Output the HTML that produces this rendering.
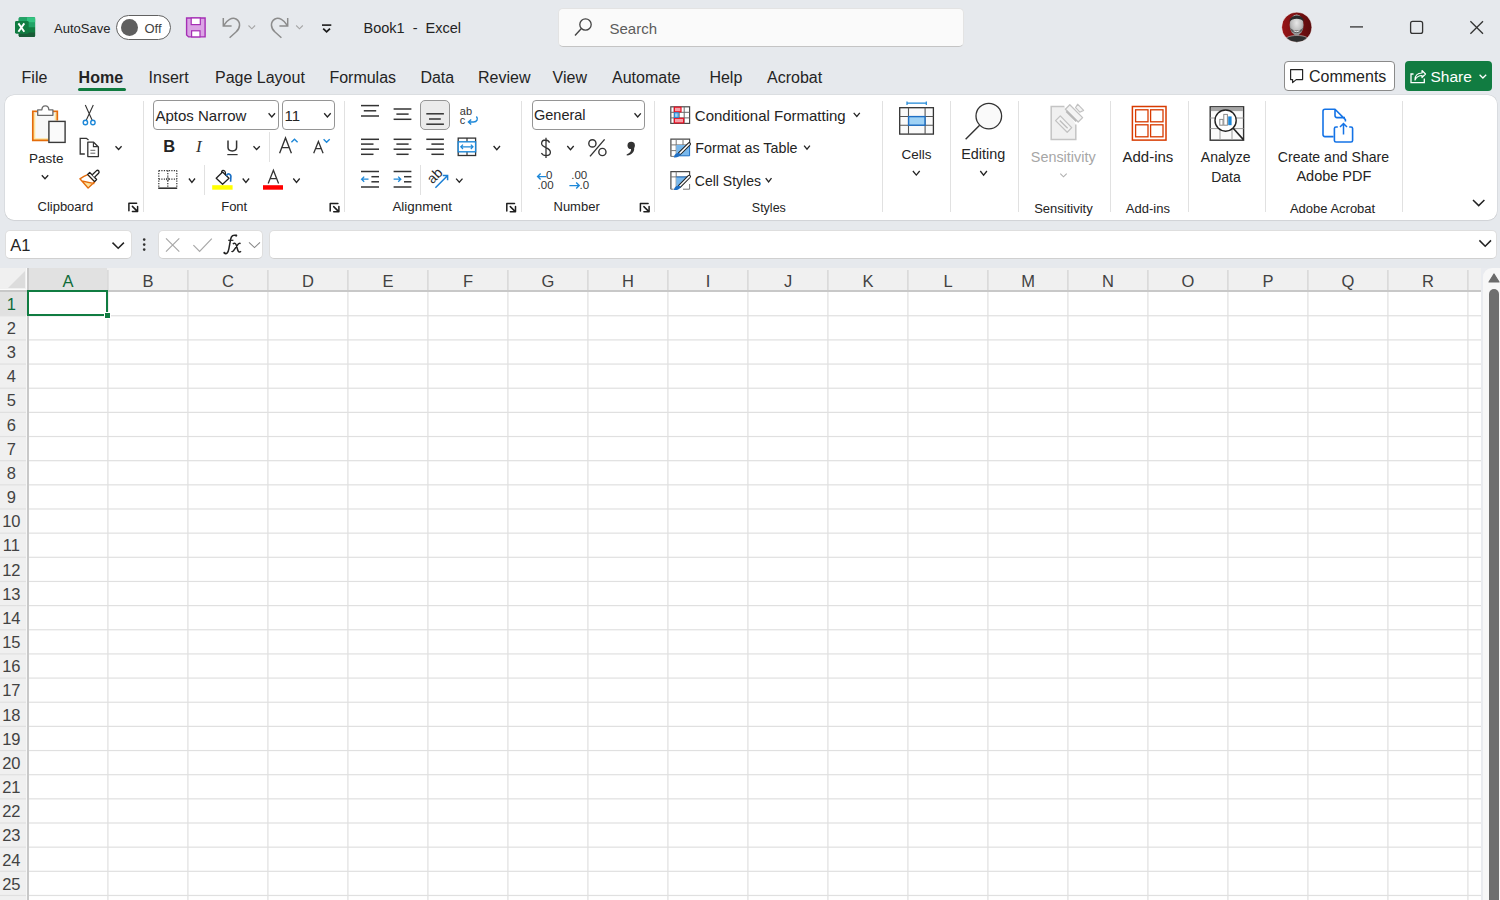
<!DOCTYPE html>
<html><head><meta charset="utf-8"><title>Book1 - Excel</title>
<style>
html,body{margin:0;padding:0;}
body{width:1500px;height:900px;overflow:hidden;position:relative;background:#e6e9ed;font-family:"Liberation Sans", sans-serif;color:#242424;}
.t{position:absolute;line-height:1;white-space:pre;}
svg{position:absolute;left:0;top:0;overflow:visible;}
</style></head><body>

<div class="t" style="left:54.0px;top:21.7px;font-size:13px;color:#242424;font-weight:normal;">AutoSave</div>
<div style="position:absolute;left:116px;top:15px;width:53px;height:23px;border:1px solid #616161;border-radius:13px;background:#fff;"></div>
<div style="position:absolute;left:121px;top:18.5px;width:17px;height:17px;border-radius:50%;background:#5f5f5f;"></div>
<div class="t" style="left:144.5px;top:21.7px;font-size:13px;color:#424242;font-weight:normal;">Off</div>
<div class="t" style="left:363.5px;top:20.7px;font-size:14.5px;color:#242424;font-weight:normal;">Book1  -  Excel</div>
<div style="position:absolute;left:558px;top:8px;width:404px;height:37px;background:#fafafa;border:1px solid #e3e3e3;border-bottom:1px solid #c4c4c4;border-radius:5px;"></div>
<div class="t" style="left:609.5px;top:21.3px;font-size:15px;color:#5c5c5c;font-weight:normal;">Search</div>
<svg width="1500" height="60" style="left:0;top:0"><defs><clipPath id="avc"><circle cx="1296.8" cy="27.2" r="15"/></clipPath><linearGradient id="avg" x1="0" x2="1"><stop offset="0" stop-color="#9c1517"/><stop offset="1" stop-color="#560b0c"/></linearGradient><radialGradient id="fcg" cx="0.5" cy="0.4" r="0.65"><stop offset="0" stop-color="#e8e8e8"/><stop offset="0.6" stop-color="#bdbdbd"/><stop offset="1" stop-color="#7a7a7a"/></radialGradient></defs><g clip-path="url(#avc)"><rect x="1280" y="10" width="34" height="34" fill="url(#avg)"/><path d="M1283 44 C1284 37 1290 35.5 1297 35.5 C1304 35.5 1310 37 1311 44 Z" fill="#2f2f2f" stroke="#d0d0d0" stroke-width="0.6"/><ellipse cx="1296.6" cy="25" rx="7" ry="10.4" fill="url(#fcg)"/><path d="M1289.6 22 C1289 14 1304 13 1303.8 22 C1301.5 17.8 1292 17.8 1289.6 22 Z" fill="#2a2a2a"/><path d="M1290 27.5 C1291 35 1302.4 35 1303.2 27.5 C1301 31.5 1292.4 31.5 1290 27.5 Z" fill="#5e5e5e"/><path d="M1293.6 30.8 Q1296.6 32.6 1299.6 30.8" stroke="#f0f0f0" stroke-width="1" fill="none"/></g><circle cx="1296.8" cy="27.2" r="15.2" fill="none" stroke="#f4f4f4" stroke-width="0.6"/></svg>
<div class="t" style="left:21.6px;top:69.7px;font-size:16px;color:#242424;font-weight:normal;">File</div>
<div class="t" style="left:148.6px;top:69.7px;font-size:16px;color:#242424;font-weight:normal;">Insert</div>
<div class="t" style="left:215.0px;top:69.7px;font-size:16px;color:#242424;font-weight:normal;">Page Layout</div>
<div class="t" style="left:329.4px;top:69.7px;font-size:16px;color:#242424;font-weight:normal;">Formulas</div>
<div class="t" style="left:420.4px;top:69.7px;font-size:16px;color:#242424;font-weight:normal;">Data</div>
<div class="t" style="left:478.0px;top:69.7px;font-size:16px;color:#242424;font-weight:normal;">Review</div>
<div class="t" style="left:552.6px;top:69.7px;font-size:16px;color:#242424;font-weight:normal;">View</div>
<div class="t" style="left:612.0px;top:69.7px;font-size:16px;color:#242424;font-weight:normal;">Automate</div>
<div class="t" style="left:709.4px;top:69.7px;font-size:16px;color:#242424;font-weight:normal;">Help</div>
<div class="t" style="left:767.0px;top:69.7px;font-size:16px;color:#242424;font-weight:normal;">Acrobat</div>
<div class="t" style="left:78.6px;top:69.7px;font-size:16px;color:#242424;font-weight:bold;">Home</div>
<div style="position:absolute;left:78px;top:88px;width:48px;height:3px;background:#0f7b3f;border-radius:2px;"></div>
<div style="position:absolute;left:1284px;top:61px;width:109px;height:28px;border:1px solid #8a8a8a;border-radius:4px;background:#fff;"></div>
<div class="t" style="left:1309.0px;top:68.7px;font-size:16px;color:#242424;font-weight:normal;">Comments</div>
<div style="position:absolute;left:1405px;top:61px;width:87px;height:30px;background:#117c41;border-radius:4px;"></div>
<div class="t" style="left:1430.5px;top:69.1px;font-size:15.5px;color:#ffffff;font-weight:normal;">Share</div>
<div style="position:absolute;left:4.5px;top:95px;width:1492.5px;height:124.6px;background:#fff;border-radius:9px;box-shadow:0 0 0 0.6px rgba(0,0,0,0.09),0 0.5px 1px rgba(0,0,0,0.05);"></div>
<div class="t" style="left:29.0px;top:151.6px;font-size:13.5px;color:#242424;font-weight:normal;">Paste</div>
<div class="t" style="left:37.5px;top:200.2px;font-size:13px;color:#242424;font-weight:normal;">Clipboard</div>
<div style="position:absolute;left:153px;top:100px;width:124px;height:28px;border:1px solid #959595;border-radius:4px;background:#fff;"></div>
<div class="t" style="left:155.5px;top:108.0px;font-size:15px;color:#242424;font-weight:normal;">Aptos Narrow</div>
<div style="position:absolute;left:282px;top:100px;width:51px;height:28px;border:1px solid #959595;border-radius:4px;background:#fff;"></div>
<div class="t" style="left:284.5px;top:108.0px;font-size:15px;color:#242424;font-weight:normal;">11</div>
<div class="t" style="left:221.2px;top:200.4px;font-size:13px;color:#242424;font-weight:normal;">Font</div>
<div class="t" style="left:392.4px;top:200.1px;font-size:13.4px;color:#242424;font-weight:normal;">Alignment</div>
<div style="position:absolute;left:420px;top:100px;width:28px;height:28px;border:1px solid #959595;border-radius:5px;background:#ebebeb;"></div>
<div style="position:absolute;left:532px;top:100px;width:111px;height:28px;border:1px solid #959595;border-radius:4px;background:#fff;"></div>
<div class="t" style="left:534.0px;top:108.4px;font-size:14.5px;color:#242424;font-weight:normal;">General</div>
<div class="t" style="left:553.5px;top:200.4px;font-size:13px;color:#242424;font-weight:normal;">Number</div>
<div class="t" style="left:694.8px;top:107.9px;font-size:15px;color:#242424;font-weight:normal;">Conditional Formatting</div>
<div class="t" style="left:695.3px;top:140.8px;font-size:14.3px;color:#242424;font-weight:normal;">Format as Table</div>
<div class="t" style="left:694.8px;top:173.5px;font-size:14px;color:#242424;font-weight:normal;">Cell Styles</div>
<div class="t" style="left:751.8px;top:201.8px;font-size:12.5px;color:#242424;font-weight:normal;">Styles</div>
<div class="t" style="left:901.5px;top:147.8px;font-size:13.5px;color:#242424;font-weight:normal;">Cells</div>
<div class="t" style="left:961.2px;top:147.0px;font-size:14.4px;color:#242424;font-weight:normal;">Editing</div>
<div class="t" style="left:1030.8px;top:149.5px;font-size:14.4px;color:#a6a6a6;font-weight:normal;">Sensitivity</div>
<div class="t" style="left:1034.2px;top:201.5px;font-size:13px;color:#242424;font-weight:normal;">Sensitivity</div>
<div class="t" style="left:1122.5px;top:149.0px;font-size:15px;color:#242424;font-weight:normal;">Add-ins</div>
<div class="t" style="left:1125.8px;top:201.5px;font-size:13px;color:#242424;font-weight:normal;">Add-ins</div>
<div class="t" style="left:1200.8px;top:149.8px;font-size:14px;color:#242424;font-weight:normal;">Analyze</div>
<div class="t" style="left:1211.2px;top:169.8px;font-size:14px;color:#242424;font-weight:normal;">Data</div>
<div class="t" style="left:1133.5px;width:400px;text-align:center;top:149.5px;font-size:14.1px;color:#242424;font-weight:normal;">Create and Share</div>
<div class="t" style="left:1133.9px;width:400px;text-align:center;top:169.1px;font-size:14.5px;color:#242424;font-weight:normal;">Adobe PDF</div>
<div class="t" style="left:1289.9px;top:201.6px;font-size:13px;color:#242424;font-weight:normal;">Adobe Acrobat</div>
<div style="position:absolute;left:143px;top:101px;width:1px;height:111px;background:#e1e1e1;"></div>
<div style="position:absolute;left:344px;top:101px;width:1px;height:111px;background:#e1e1e1;"></div>
<div style="position:absolute;left:521px;top:101px;width:1px;height:111px;background:#e1e1e1;"></div>
<div style="position:absolute;left:654px;top:101px;width:1px;height:111px;background:#e1e1e1;"></div>
<div style="position:absolute;left:882px;top:101px;width:1px;height:111px;background:#e1e1e1;"></div>
<div style="position:absolute;left:950px;top:101px;width:1px;height:111px;background:#e1e1e1;"></div>
<div style="position:absolute;left:1018px;top:101px;width:1px;height:111px;background:#e1e1e1;"></div>
<div style="position:absolute;left:1110px;top:101px;width:1px;height:111px;background:#e1e1e1;"></div>
<div style="position:absolute;left:1188px;top:101px;width:1px;height:111px;background:#e1e1e1;"></div>
<div style="position:absolute;left:1265px;top:101px;width:1px;height:111px;background:#e1e1e1;"></div>
<div style="position:absolute;left:1402px;top:101px;width:1px;height:111px;background:#e1e1e1;"></div>
<div style="position:absolute;left:269px;top:132px;width:1px;height:30px;background:#e1e1e1;"></div>
<div style="position:absolute;left:204px;top:165px;width:1px;height:30px;background:#e1e1e1;"></div>
<div style="position:absolute;left:420px;top:165px;width:1px;height:30px;background:#e1e1e1;"></div>
<div style="position:absolute;left:5px;top:230px;width:125px;height:27px;border:1px solid #dedede;border-bottom-color:#d0d0d0;border-radius:5px;background:#fff;"></div>
<div class="t" style="left:10.3px;top:236.8px;font-size:16.5px;color:#242424;font-weight:normal;">A1</div>
<div style="position:absolute;left:158px;top:230px;width:103px;height:27px;border:1px solid #dedede;border-bottom-color:#d0d0d0;border-radius:5px;background:#fff;"></div>
<div style="position:absolute;left:269px;top:230px;width:1226px;height:27px;border:1px solid #dedede;border-bottom-color:#d0d0d0;border-radius:5px;background:#fff;"></div>
<div style="position:absolute;left:0px;top:268px;width:1481px;height:632px;background:#ffffff;"></div>
<div style="position:absolute;left:0px;top:268px;width:1481px;height:22px;background:#f0f0f0;"></div>
<div style="position:absolute;left:29px;top:268px;width:78px;height:22px;background:#e1e1e1;"></div>
<div style="position:absolute;left:0px;top:292px;width:27px;height:608px;background:#f0f0f0;"></div>
<div style="position:absolute;left:0px;top:290px;width:1481px;height:2px;background:#c8c8c8;"></div>
<div style="position:absolute;left:0px;top:289px;width:27px;height:1px;background:#fbfbfb;"></div>
<svg width="30" height="300" style="left:0;top:0"><polygon points="8,288 25,288 25,271" fill="#dcdcdc"/></svg>
<div style="position:absolute;left:27px;top:268px;width:2px;height:632px;background:#c8c8c8;"></div>
<div style="position:absolute;left:26px;top:292px;width:1px;height:608px;background:#f7f7f7;"></div>
<div style="position:absolute;left:26px;top:268px;width:1px;height:22px;background:#fbfbfb;"></div>
<svg width="1500" height="900" style="left:0;top:0"><rect x="29" y="315.15" width="1452" height="1.2" fill="#e0e0e0"/><rect x="0" y="315.15" width="26" height="1.2" fill="#e0e0e0"/><rect x="29" y="339.30" width="1452" height="1.2" fill="#e0e0e0"/><rect x="0" y="339.30" width="26" height="1.2" fill="#e0e0e0"/><rect x="29" y="363.46" width="1452" height="1.2" fill="#e0e0e0"/><rect x="0" y="363.46" width="26" height="1.2" fill="#e0e0e0"/><rect x="29" y="387.62" width="1452" height="1.2" fill="#e0e0e0"/><rect x="0" y="387.62" width="26" height="1.2" fill="#e0e0e0"/><rect x="29" y="411.77" width="1452" height="1.2" fill="#e0e0e0"/><rect x="0" y="411.77" width="26" height="1.2" fill="#e0e0e0"/><rect x="29" y="435.92" width="1452" height="1.2" fill="#e0e0e0"/><rect x="0" y="435.92" width="26" height="1.2" fill="#e0e0e0"/><rect x="29" y="460.08" width="1452" height="1.2" fill="#e0e0e0"/><rect x="0" y="460.08" width="26" height="1.2" fill="#e0e0e0"/><rect x="29" y="484.24" width="1452" height="1.2" fill="#e0e0e0"/><rect x="0" y="484.24" width="26" height="1.2" fill="#e0e0e0"/><rect x="29" y="508.39" width="1452" height="1.2" fill="#e0e0e0"/><rect x="0" y="508.39" width="26" height="1.2" fill="#e0e0e0"/><rect x="29" y="532.54" width="1452" height="1.2" fill="#e0e0e0"/><rect x="0" y="532.54" width="26" height="1.2" fill="#e0e0e0"/><rect x="29" y="556.70" width="1452" height="1.2" fill="#e0e0e0"/><rect x="0" y="556.70" width="26" height="1.2" fill="#e0e0e0"/><rect x="29" y="580.86" width="1452" height="1.2" fill="#e0e0e0"/><rect x="0" y="580.86" width="26" height="1.2" fill="#e0e0e0"/><rect x="29" y="605.01" width="1452" height="1.2" fill="#e0e0e0"/><rect x="0" y="605.01" width="26" height="1.2" fill="#e0e0e0"/><rect x="29" y="629.16" width="1452" height="1.2" fill="#e0e0e0"/><rect x="0" y="629.16" width="26" height="1.2" fill="#e0e0e0"/><rect x="29" y="653.32" width="1452" height="1.2" fill="#e0e0e0"/><rect x="0" y="653.32" width="26" height="1.2" fill="#e0e0e0"/><rect x="29" y="677.48" width="1452" height="1.2" fill="#e0e0e0"/><rect x="0" y="677.48" width="26" height="1.2" fill="#e0e0e0"/><rect x="29" y="701.63" width="1452" height="1.2" fill="#e0e0e0"/><rect x="0" y="701.63" width="26" height="1.2" fill="#e0e0e0"/><rect x="29" y="725.78" width="1452" height="1.2" fill="#e0e0e0"/><rect x="0" y="725.78" width="26" height="1.2" fill="#e0e0e0"/><rect x="29" y="749.94" width="1452" height="1.2" fill="#e0e0e0"/><rect x="0" y="749.94" width="26" height="1.2" fill="#e0e0e0"/><rect x="29" y="774.10" width="1452" height="1.2" fill="#e0e0e0"/><rect x="0" y="774.10" width="26" height="1.2" fill="#e0e0e0"/><rect x="29" y="798.25" width="1452" height="1.2" fill="#e0e0e0"/><rect x="0" y="798.25" width="26" height="1.2" fill="#e0e0e0"/><rect x="29" y="822.40" width="1452" height="1.2" fill="#e0e0e0"/><rect x="0" y="822.40" width="26" height="1.2" fill="#e0e0e0"/><rect x="29" y="846.56" width="1452" height="1.2" fill="#e0e0e0"/><rect x="0" y="846.56" width="26" height="1.2" fill="#e0e0e0"/><rect x="29" y="870.72" width="1452" height="1.2" fill="#e0e0e0"/><rect x="0" y="870.72" width="26" height="1.2" fill="#e0e0e0"/><rect x="29" y="894.87" width="1452" height="1.2" fill="#e0e0e0"/><rect x="0" y="894.87" width="26" height="1.2" fill="#e0e0e0"/><rect x="29" y="919.02" width="1452" height="1.2" fill="#e0e0e0"/><rect x="0" y="919.02" width="26" height="1.2" fill="#e0e0e0"/><rect x="107.30" y="292" width="1.2" height="608" fill="#e0e0e0"/><rect x="107.30" y="270" width="1.2" height="20" fill="#d0d0d0"/><rect x="187.30" y="292" width="1.2" height="608" fill="#e0e0e0"/><rect x="187.30" y="270" width="1.2" height="20" fill="#d0d0d0"/><rect x="267.30" y="292" width="1.2" height="608" fill="#e0e0e0"/><rect x="267.30" y="270" width="1.2" height="20" fill="#d0d0d0"/><rect x="347.30" y="292" width="1.2" height="608" fill="#e0e0e0"/><rect x="347.30" y="270" width="1.2" height="20" fill="#d0d0d0"/><rect x="427.30" y="292" width="1.2" height="608" fill="#e0e0e0"/><rect x="427.30" y="270" width="1.2" height="20" fill="#d0d0d0"/><rect x="507.30" y="292" width="1.2" height="608" fill="#e0e0e0"/><rect x="507.30" y="270" width="1.2" height="20" fill="#d0d0d0"/><rect x="587.30" y="292" width="1.2" height="608" fill="#e0e0e0"/><rect x="587.30" y="270" width="1.2" height="20" fill="#d0d0d0"/><rect x="667.30" y="292" width="1.2" height="608" fill="#e0e0e0"/><rect x="667.30" y="270" width="1.2" height="20" fill="#d0d0d0"/><rect x="747.30" y="292" width="1.2" height="608" fill="#e0e0e0"/><rect x="747.30" y="270" width="1.2" height="20" fill="#d0d0d0"/><rect x="827.30" y="292" width="1.2" height="608" fill="#e0e0e0"/><rect x="827.30" y="270" width="1.2" height="20" fill="#d0d0d0"/><rect x="907.30" y="292" width="1.2" height="608" fill="#e0e0e0"/><rect x="907.30" y="270" width="1.2" height="20" fill="#d0d0d0"/><rect x="987.30" y="292" width="1.2" height="608" fill="#e0e0e0"/><rect x="987.30" y="270" width="1.2" height="20" fill="#d0d0d0"/><rect x="1067.30" y="292" width="1.2" height="608" fill="#e0e0e0"/><rect x="1067.30" y="270" width="1.2" height="20" fill="#d0d0d0"/><rect x="1147.30" y="292" width="1.2" height="608" fill="#e0e0e0"/><rect x="1147.30" y="270" width="1.2" height="20" fill="#d0d0d0"/><rect x="1227.30" y="292" width="1.2" height="608" fill="#e0e0e0"/><rect x="1227.30" y="270" width="1.2" height="20" fill="#d0d0d0"/><rect x="1307.30" y="292" width="1.2" height="608" fill="#e0e0e0"/><rect x="1307.30" y="270" width="1.2" height="20" fill="#d0d0d0"/><rect x="1387.30" y="292" width="1.2" height="608" fill="#e0e0e0"/><rect x="1387.30" y="270" width="1.2" height="20" fill="#d0d0d0"/><rect x="1467.30" y="292" width="1.2" height="608" fill="#e0e0e0"/><rect x="1467.30" y="270" width="1.2" height="20" fill="#d0d0d0"/></svg>
<div style="position:absolute;left:0px;top:292px;width:27px;height:23px;background:#e1e1e1;"></div>
<div class="t" style="left:-132.0px;width:400px;text-align:center;top:272.6px;font-size:16.5px;color:#0e6b38;font-weight:normal;">A</div>
<div class="t" style="left:-52.0px;width:400px;text-align:center;top:272.6px;font-size:16.5px;color:#424242;font-weight:normal;">B</div>
<div class="t" style="left:28.0px;width:400px;text-align:center;top:272.6px;font-size:16.5px;color:#424242;font-weight:normal;">C</div>
<div class="t" style="left:108.0px;width:400px;text-align:center;top:272.6px;font-size:16.5px;color:#424242;font-weight:normal;">D</div>
<div class="t" style="left:188.0px;width:400px;text-align:center;top:272.6px;font-size:16.5px;color:#424242;font-weight:normal;">E</div>
<div class="t" style="left:268.0px;width:400px;text-align:center;top:272.6px;font-size:16.5px;color:#424242;font-weight:normal;">F</div>
<div class="t" style="left:348.0px;width:400px;text-align:center;top:272.6px;font-size:16.5px;color:#424242;font-weight:normal;">G</div>
<div class="t" style="left:428.0px;width:400px;text-align:center;top:272.6px;font-size:16.5px;color:#424242;font-weight:normal;">H</div>
<div class="t" style="left:508.0px;width:400px;text-align:center;top:272.6px;font-size:16.5px;color:#424242;font-weight:normal;">I</div>
<div class="t" style="left:588.0px;width:400px;text-align:center;top:272.6px;font-size:16.5px;color:#424242;font-weight:normal;">J</div>
<div class="t" style="left:668.0px;width:400px;text-align:center;top:272.6px;font-size:16.5px;color:#424242;font-weight:normal;">K</div>
<div class="t" style="left:748.0px;width:400px;text-align:center;top:272.6px;font-size:16.5px;color:#424242;font-weight:normal;">L</div>
<div class="t" style="left:828.0px;width:400px;text-align:center;top:272.6px;font-size:16.5px;color:#424242;font-weight:normal;">M</div>
<div class="t" style="left:908.0px;width:400px;text-align:center;top:272.6px;font-size:16.5px;color:#424242;font-weight:normal;">N</div>
<div class="t" style="left:988.0px;width:400px;text-align:center;top:272.6px;font-size:16.5px;color:#424242;font-weight:normal;">O</div>
<div class="t" style="left:1068.0px;width:400px;text-align:center;top:272.6px;font-size:16.5px;color:#424242;font-weight:normal;">P</div>
<div class="t" style="left:1148.0px;width:400px;text-align:center;top:272.6px;font-size:16.5px;color:#424242;font-weight:normal;">Q</div>
<div class="t" style="left:1228.0px;width:400px;text-align:center;top:272.6px;font-size:16.5px;color:#424242;font-weight:normal;">R</div>
<div class="t" style="left:-188.7px;width:400px;text-align:center;top:296.2px;font-size:16.5px;color:#0e6b38;font-weight:normal;">1</div>
<div class="t" style="left:-188.7px;width:400px;text-align:center;top:320.2px;font-size:16.5px;color:#424242;font-weight:normal;">2</div>
<div class="t" style="left:-188.7px;width:400px;text-align:center;top:344.2px;font-size:16.5px;color:#424242;font-weight:normal;">3</div>
<div class="t" style="left:-188.7px;width:400px;text-align:center;top:368.2px;font-size:16.5px;color:#424242;font-weight:normal;">4</div>
<div class="t" style="left:-188.7px;width:400px;text-align:center;top:392.2px;font-size:16.5px;color:#424242;font-weight:normal;">5</div>
<div class="t" style="left:-188.7px;width:400px;text-align:center;top:417.2px;font-size:16.5px;color:#424242;font-weight:normal;">6</div>
<div class="t" style="left:-188.7px;width:400px;text-align:center;top:441.2px;font-size:16.5px;color:#424242;font-weight:normal;">7</div>
<div class="t" style="left:-188.7px;width:400px;text-align:center;top:465.2px;font-size:16.5px;color:#424242;font-weight:normal;">8</div>
<div class="t" style="left:-188.7px;width:400px;text-align:center;top:489.2px;font-size:16.5px;color:#424242;font-weight:normal;">9</div>
<div class="t" style="left:-188.7px;width:400px;text-align:center;top:513.2px;font-size:16.5px;color:#424242;font-weight:normal;">10</div>
<div class="t" style="left:-188.7px;width:400px;text-align:center;top:537.2px;font-size:16.5px;color:#424242;font-weight:normal;">11</div>
<div class="t" style="left:-188.7px;width:400px;text-align:center;top:562.2px;font-size:16.5px;color:#424242;font-weight:normal;">12</div>
<div class="t" style="left:-188.7px;width:400px;text-align:center;top:586.2px;font-size:16.5px;color:#424242;font-weight:normal;">13</div>
<div class="t" style="left:-188.7px;width:400px;text-align:center;top:610.2px;font-size:16.5px;color:#424242;font-weight:normal;">14</div>
<div class="t" style="left:-188.7px;width:400px;text-align:center;top:634.2px;font-size:16.5px;color:#424242;font-weight:normal;">15</div>
<div class="t" style="left:-188.7px;width:400px;text-align:center;top:658.2px;font-size:16.5px;color:#424242;font-weight:normal;">16</div>
<div class="t" style="left:-188.7px;width:400px;text-align:center;top:682.2px;font-size:16.5px;color:#424242;font-weight:normal;">17</div>
<div class="t" style="left:-188.7px;width:400px;text-align:center;top:707.2px;font-size:16.5px;color:#424242;font-weight:normal;">18</div>
<div class="t" style="left:-188.7px;width:400px;text-align:center;top:731.2px;font-size:16.5px;color:#424242;font-weight:normal;">19</div>
<div class="t" style="left:-188.7px;width:400px;text-align:center;top:755.2px;font-size:16.5px;color:#424242;font-weight:normal;">20</div>
<div class="t" style="left:-188.7px;width:400px;text-align:center;top:779.2px;font-size:16.5px;color:#424242;font-weight:normal;">21</div>
<div class="t" style="left:-188.7px;width:400px;text-align:center;top:803.2px;font-size:16.5px;color:#424242;font-weight:normal;">22</div>
<div class="t" style="left:-188.7px;width:400px;text-align:center;top:827.2px;font-size:16.5px;color:#424242;font-weight:normal;">23</div>
<div class="t" style="left:-188.7px;width:400px;text-align:center;top:852.2px;font-size:16.5px;color:#424242;font-weight:normal;">24</div>
<div class="t" style="left:-188.7px;width:400px;text-align:center;top:876.2px;font-size:16.5px;color:#424242;font-weight:normal;">25</div>
<div style="position:absolute;left:27px;top:290px;width:81px;height:26px;border:2px solid #107c41;box-sizing:border-box;"></div>
<div style="position:absolute;left:105px;top:313px;width:5px;height:5px;background:#107c41;border:1px solid #fff;box-sizing:content-box;left:104px;top:312px;"></div>
<div style="position:absolute;left:1481px;top:268px;width:19px;height:632px;background:#e9ebef;"></div>
<div style="position:absolute;left:1483px;top:268px;width:30px;height:640px;background:#f7f7f7;border-radius:9px;"></div>
<div style="position:absolute;left:1489px;top:289px;width:10px;height:640px;background:#6f6f6f;border-radius:5px;"></div>
<svg width="1500" height="300" style="left:0;top:0"><path d="M1489 282 L1494 274 L1499 282 Z" fill="#6b6b6b" stroke="#6b6b6b" stroke-width="1.2" stroke-linejoin="round"/></svg>
<svg width="1500" height="270" style="left:0;top:0"><rect x="18.7" y="17.3" width="16.4" height="19.8" rx="1.6" fill="#107c41"/><rect x="18.7" y="17.3" width="16.4" height="5.3" rx="1.2" fill="#21a366"/><rect x="27" y="17.3" width="8.1" height="5.3" fill="#33c481"/><rect x="18.7" y="22.6" width="16.4" height="4.9" fill="#21a366"/><rect x="18.7" y="27.5" width="16.4" height="5" fill="#107c41"/><path d="M18.7 32.5 H35.1 V35.6 Q35.1 37.1 33.6 37.1 H20.2 Q18.7 37.1 18.7 35.6 Z" fill="#185c37"/><rect x="15" y="20.9" width="13.7" height="12.8" rx="1.4" fill="#107c41"/><path fill="none" d="M18.4 23.4 L24.3 31.7 M24.3 23.4 L18.4 31.7" stroke="#fff" stroke-width="1.9"/><path d="M186.6 18 H205.1 V36.9 H188.6 L186.6 34.9 Z" fill="#dba4e5" stroke="#a52fb5" stroke-width="1.4"/><rect x="191.2" y="18" width="9.1" height="6.6" fill="#fff" stroke="#a52fb5" stroke-width="1.2"/><rect x="191.6" y="30.8" width="8.4" height="6.1" fill="#fff" stroke="#a52fb5" stroke-width="1.2"/><path d="M223.3 18 V25.9 H231.6 M223.8 25.4 C227 20 232 17 236 19 C241 22 240.5 28 236 32 L229.6 37.7" fill="none" stroke="#8c8c8c" stroke-width="1.5"/><path d="M248.5 25.5 L251.8 28.8 L255.1 25.5" fill="none" stroke="#a6a6a6" stroke-width="1.1"/><path d="M287.7 18 V25.9 H279.4 M287.2 25.4 C284 20 279 17 275 19 C270 22 270.5 28 275 32 L281.4 37.7" fill="none" stroke="#8c8c8c" stroke-width="1.5"/><path d="M296.2 25.5 L299.5 28.8 L302.8 25.5" fill="none" stroke="#a6a6a6" stroke-width="1.1"/><path fill="none" d="M322 25.1 H331.3" stroke="#1b1b1b" stroke-width="1.6"/><path d="M323.2 28.6 L326.6 31.8 L330 28.6" fill="none" stroke="#1b1b1b" stroke-width="1.8"/><circle cx="585.5" cy="24.5" r="5.7" fill="none" stroke="#444" stroke-width="1.3"/><path fill="none" d="M581.4 28.6 L575 35.5" stroke="#444" stroke-width="1.4"/><path fill="none" d="M1350 26.9 H1363" stroke="#333" stroke-width="1.3"/><rect x="1410.6" y="21.4" width="12" height="12" rx="2" fill="none" stroke="#333" stroke-width="1.3"/><path fill="none" d="M1470.4 21.2 L1483 33.8 M1483 21.2 L1470.4 33.8" stroke="#333" stroke-width="1.3"/><path d="M1290.6 69.6 H1302.6 V79.6 H1296.2 L1292.6 82.6 V79.6 H1290.6 Z" fill="none" stroke="#242424" stroke-width="1.2" stroke-linejoin="round"/><path d="M1413.5 74 H1411 V82.6 H1424.3 V78.5" fill="none" stroke="#fff" stroke-width="1.3"/><path d="M1415 80 C1415 75 1418 73 1422 73 V70.5 L1425.5 74 L1422 77.5 V75.5 C1419 75.5 1416.5 77 1415 80 Z" fill="none" stroke="#fff" stroke-width="1.2" stroke-linejoin="round"/><path d="M1479.6 74.8 L1482.9 78 L1486.2 74.8" fill="none" stroke="#fff" stroke-width="1.3"/><rect x="33.5" y="112" width="23" height="28" fill="#f8f8f8"/><path d="M34.3 112.9 V139.2 H48.5 M55.7 112.9 V120.5" fill="none" stroke="#fde49b" stroke-width="2"/><path d="M37.3 111.4 H32.8 V140.3 H48.5" fill="none" stroke="#e46c0a" stroke-width="1.7"/><path d="M53 111.4 H57.3 V120.5" fill="none" stroke="#e46c0a" stroke-width="1.7"/><path d="M37.7 109.8 H41.9 C42 104.5 48.7 104.5 48.8 109.8 H52.9 V115.3 H37.7 Z" fill="#fff" stroke="#6b6b6b" stroke-width="1.3" stroke-linejoin="round"/><rect x="48.9" y="121.4" width="16.2" height="21" fill="#fafafa" stroke="#3a3a3a" stroke-width="1.4"/><path d="M41.8 175.3 L45.0 178.8 L48.2 175.3" fill="none" stroke="#242424" stroke-width="1.3"/><path fill="none" d="M85.3 105 L92.4 120.7 M93.3 105 L86 120.7" stroke="#333" stroke-width="1.1"/><circle cx="85.4" cy="122.5" r="2.2" fill="#fff" stroke="#1e88d8" stroke-width="1.4"/><circle cx="92.9" cy="122.5" r="2.2" fill="#fff" stroke="#1e88d8" stroke-width="1.4"/><path d="M84.8 154 H80.2 V138.3 H86.4 L88.5 140" fill="none" stroke="#333" stroke-width="1.3"/><path d="M87.8 142.2 H93.6 L98.4 147 V156.6 H87.8 Z" fill="#fff" stroke="#333" stroke-width="1.3" stroke-linejoin="round"/><path d="M93.4 142.4 V146.6 H98.2" fill="none" stroke="#333" stroke-width="1.1"/><path fill="none" d="M90.4 150.3 H95.3 M90.4 153.2 H95.3" stroke="#666" stroke-width="1"/><path d="M115.5 146.3 L118.6 149.5 L121.6 146.3" fill="none" stroke="#242424" stroke-width="1.3"/><path d="M83.2 182.2 L92.4 183.4 L88.1 186.9 Z" fill="#fde49b"/><path d="M79.9 178.8 Q84 176.2 87.7 174.6 L94.8 181.8 L88.1 188 Z M81.8 181 L94.4 183.6" fill="none" stroke="#e46c0a" stroke-width="1.4" stroke-linejoin="round"/><path d="M87.6 174.4 L89.7 172.4 L96.6 179.5 L94.6 181.6 Z" fill="#fff" stroke="#1e1e1e" stroke-width="1.3" stroke-linejoin="round"/><path d="M92.3 174.8 L96.6 170.6 Q97.8 169.8 98.8 171 Q99.6 172.2 98.6 173.2 L94.4 177.4" fill="#fff" stroke="#1e1e1e" stroke-width="1.3" stroke-linejoin="round"/><path d="M128.9 210.7 V203.2 H136.6 M132.4 206.4 L137.4 211.4 M132.4 211.6 H137.6 V206.4" fill="none" stroke="#1e1e1e" stroke-width="1.5" stroke-linecap="round" stroke-linejoin="round"/><path d="M268.6 113.3 L271.8 117.0 L275.0 113.3" fill="none" stroke="#242424" stroke-width="1.3"/><path d="M324.2 113.3 L327.4 117.0 L330.7 113.3" fill="none" stroke="#242424" stroke-width="1.3"/><text x="163.2" y="152.3" font-family="Liberation Sans" font-weight="bold" font-size="16.5" fill="#242424">B</text><text x="196" y="152.3" font-family="Liberation Serif" font-style="italic" font-size="17" fill="#333">I</text><path d="M228 140.4 V147.6 C228 152 236.6 152 236.6 147.6 V140.4" fill="none" stroke="#333" stroke-width="1.5"/><path fill="none" d="M227.3 154.6 H237.6" stroke="#333" stroke-width="1.2"/><path d="M253.5 146.3 L256.6 149.5 L259.8 146.3" fill="none" stroke="#242424" stroke-width="1.3"/><path d="M279.6 153.3 L285.5 138 L291.4 153.3 M281.9 147.6 H289.1" fill="none" stroke="#333" stroke-width="1.35"/><path d="M291.4 142.2 L294.5 139.2 L297.6 142.2" fill="none" stroke="#1e88d8" stroke-width="1.4"/><path d="M313.7 153.3 L318.4 141.6 L323.1 153.3 M315.6 148.6 H321.2" fill="none" stroke="#333" stroke-width="1.3"/><path d="M323.6 139.2 L326.6 142.2 L329.7 139.2" fill="none" stroke="#1e88d8" stroke-width="1.4"/><path d="M158.8 170.6 H177 M158.8 179.1 H177 M158.8 170.6 V187.2 M167.8 170.6 V187.2 M176.8 170.6 V187.2" fill="none" stroke="#3a3a3a" stroke-width="1.25" stroke-dasharray="1.25 1.25"/><circle cx="167.8" cy="179.1" r="1.3" fill="#fff" stroke="#333" stroke-width="0.9"/><path fill="none" d="M158.2 188.2 H177.2" stroke="#333" stroke-width="1.6"/><path d="M188.9 178.5 L191.9 182.4 L195.0 178.5" fill="none" stroke="#242424" stroke-width="1.3"/><path d="M216.2 178.3 L222.6 172 L229 178.3 L222.6 184.3 Z" fill="#fff" stroke="#222" stroke-width="1.3" stroke-linejoin="round"/><path d="M221.6 173 C221 169.6 224.8 169.4 225.4 172.4 L225.6 175.5" fill="none" stroke="#222" stroke-width="1.2"/><path d="M226.3 175.8 C228.2 172.5 231.6 174 230.8 178 L230.6 181.8" fill="none" stroke="#1a6fc4" stroke-width="1.6"/><rect x="212.2" y="185.2" width="20.4" height="4.5" fill="#ffff00"/><path d="M242.7 178.5 L245.9 182.4 L249.1 178.5" fill="none" stroke="#242424" stroke-width="1.3"/><path d="M268.2 183.6 L273.4 170.2 L278.6 183.6 M270.2 178.6 H276.6" fill="none" stroke="#333" stroke-width="1.3"/><rect x="263" y="185.2" width="20" height="4.5" fill="#ff0000"/><path d="M293.3 178.5 L296.5 182.4 L299.7 178.5" fill="none" stroke="#242424" stroke-width="1.3"/><path d="M330.2 210.9 V203.4 H337.9 M333.7 206.6 L338.7 211.6 M333.7 211.8 H338.9 V206.6" fill="none" stroke="#1e1e1e" stroke-width="1.5" stroke-linecap="round" stroke-linejoin="round"/><path fill="none" d="M361.0 105.6 H379.0" stroke="#333" stroke-width="1.5"/><path fill="none" d="M363.8 110.8 H376.2" stroke="#333" stroke-width="1.5"/><path fill="none" d="M361.0 116.0 H379.0" stroke="#333" stroke-width="1.5"/><path fill="none" d="M393.6 109.0 H411.4" stroke="#333" stroke-width="1.5"/><path fill="none" d="M396.4 114.1 H408.6" stroke="#333" stroke-width="1.5"/><path fill="none" d="M393.6 119.3 H411.4" stroke="#333" stroke-width="1.5"/><path fill="none" d="M426.3 113.8 H443.9" stroke="#333" stroke-width="1.5"/><path fill="none" d="M429.0 119.0 H440.8" stroke="#333" stroke-width="1.5"/><path fill="none" d="M426.3 124.2 H443.9" stroke="#333" stroke-width="1.5"/><text x="459.8" y="114.6" font-family="Liberation Sans" font-size="11" fill="#333">ab</text><text x="459.8" y="123.6" font-family="Liberation Sans" font-size="11" fill="#333">c</text><path d="M476.4 116.5 C478.5 119 477 122 473.5 122 H468.6 M471.2 119.4 L468.4 122 L471.2 124.6" fill="none" stroke="#1e88d8" stroke-width="1.4"/><path fill="none" d="M361.0 139.3 H379.0" stroke="#333" stroke-width="1.5"/><path fill="none" d="M393.6 139.3 H411.4" stroke="#333" stroke-width="1.5"/><path fill="none" d="M361.0 144.1 H373.5" stroke="#333" stroke-width="1.5"/><path fill="none" d="M396.4 144.1 H408.6" stroke="#333" stroke-width="1.5"/><path fill="none" d="M361.0 149.2 H379.0" stroke="#333" stroke-width="1.5"/><path fill="none" d="M393.6 149.2 H411.4" stroke="#333" stroke-width="1.5"/><path fill="none" d="M361.0 154.3 H373.5" stroke="#333" stroke-width="1.5"/><path fill="none" d="M396.4 154.3 H408.6" stroke="#333" stroke-width="1.5"/><path fill="none" d="M426.3 139.3 H443.9" stroke="#333" stroke-width="1.5"/><path fill="none" d="M431.4 144.1 H443.9" stroke="#333" stroke-width="1.5"/><path fill="none" d="M426.3 149.2 H443.9" stroke="#333" stroke-width="1.5"/><path fill="none" d="M431.4 154.3 H443.9" stroke="#333" stroke-width="1.5"/><rect x="458.2" y="138.1" width="17.4" height="17.4" fill="none" stroke="#333" stroke-width="1.3"/><path fill="none" d="M467 138.1 V155.5" stroke="#333" stroke-width="1.2"/><rect x="458.2" y="141.8" width="17.4" height="10" fill="#fff" stroke="#1e88d8" stroke-width="1.4"/><path d="M460.8 146.8 H473 M463 144.6 L460.8 146.8 L463 149 M470.8 144.6 L473 146.8 L470.8 149" fill="none" stroke="#1e88d8" stroke-width="1.2"/><path d="M493.6 146.0 L496.8 149.7 L500.0 146.0" fill="none" stroke="#242424" stroke-width="1.3"/><path fill="none" d="M361.0 171.5 H379.0" stroke="#333" stroke-width="1.5"/><path fill="none" d="M361.0 187.0 H379.0" stroke="#333" stroke-width="1.5"/><path fill="none" d="M371.4 176.7 H379.0" stroke="#333" stroke-width="1.5"/><path fill="none" d="M371.4 181.8 H379.0" stroke="#333" stroke-width="1.5"/><path fill="none" d="M393.6 171.5 H411.4" stroke="#333" stroke-width="1.5"/><path fill="none" d="M393.6 187.0 H411.4" stroke="#333" stroke-width="1.5"/><path fill="none" d="M404.0 176.7 H411.4" stroke="#333" stroke-width="1.5"/><path fill="none" d="M404.0 181.8 H411.4" stroke="#333" stroke-width="1.5"/><path d="M368.5 179.2 H361.6 M364.2 176.6 L361.6 179.2 L364.2 181.8" fill="none" stroke="#1e88d8" stroke-width="1.3"/><path d="M393.6 179.2 H400.8 M398.2 176.6 L400.8 179.2 L398.2 181.8" fill="none" stroke="#1e88d8" stroke-width="1.3"/><text x="0" y="0" transform="translate(432.6 184.6) rotate(-45)" font-family="Liberation Sans" font-size="14" fill="#2a2a2a">ab</text><path d="M435.4 187.8 L447.4 175.8 M442.8 175.6 H447.6 V180.2" fill="none" stroke="#1a7fd4" stroke-width="1.5"/><path d="M456.1 178.6 L459.3 182.3 L462.5 178.6" fill="none" stroke="#242424" stroke-width="1.3"/><path d="M506.8 210.9 V203.4 H514.5 M510.3 206.6 L515.3 211.6 M510.3 211.8 H515.5 V206.6" fill="none" stroke="#1e1e1e" stroke-width="1.5" stroke-linecap="round" stroke-linejoin="round"/><path d="M634.5 113.3 L637.7 117.0 L640.8 113.3" fill="none" stroke="#242424" stroke-width="1.3"/><path d="M549.6 142.6 C548.6 140.6 546.8 140 545.4 140 C542.6 140 541.6 142 541.6 143.6 C541.6 148.2 550.4 147 550.4 152.2 C550.4 154.4 548.6 155.6 546 155.6 C544 155.6 542.4 154.8 541.4 153 M546 137.8 V158" fill="none" stroke="#333" stroke-width="1.3"/><path d="M567.3 146.0 L570.5 149.7 L573.7 146.0" fill="none" stroke="#242424" stroke-width="1.3"/><circle cx="592.4" cy="143.4" r="3.6" fill="none" stroke="#333" stroke-width="1.4"/><circle cx="602.4" cy="152" r="3.6" fill="none" stroke="#333" stroke-width="1.4"/><path fill="none" d="M604.6 139.4 L590 156.4" stroke="#333" stroke-width="1.4"/><circle cx="631.2" cy="145.4" r="3.7" fill="#333"/><path d="M633.6 146.4 C635.6 150.5 632.5 154.5 626.8 155.6 L626.6 154.4 C630.2 153 631.4 151 631 148.4 Z" fill="#333"/><text x="546" y="179.2" font-family="Liberation Sans" font-size="11.5" fill="#333">0</text><text x="537.6" y="188.6" font-family="Liberation Sans" font-size="11.5" fill="#333">.00</text><path d="M546.4 176.6 H537.8 M540.6 173.6 L537.6 176.6 L540.6 179.6" fill="none" stroke="#1e88d8" stroke-width="1.4"/><text x="571.2" y="179.2" font-family="Liberation Sans" font-size="11.5" fill="#333">.00</text><text x="579.5" y="188.6" font-family="Liberation Sans" font-size="11.5" fill="#333">.0</text><path d="M569.4 185.6 H579.2 M576.2 182.6 L579.2 185.6 L576.2 188.6" fill="none" stroke="#1e88d8" stroke-width="1.4"/><path d="M640.4 210.9 V203.4 H648.1 M643.9 206.6 L648.9 211.6 M643.9 211.8 H649.1 V206.6" fill="none" stroke="#1e1e1e" stroke-width="1.5" stroke-linecap="round" stroke-linejoin="round"/><rect x="670.8" y="106.8" width="18.8" height="16.6" fill="#fff" stroke="#4a4a4a" stroke-width="1.2"/><path fill="none" d="M670.8 112.3 H689.6 M670.8 117.9 H689.6 M674.2 106.8 V123.4 M679.2 106.8 V123.4 M684.2 106.8 V123.4" stroke="#6a6a6a" stroke-width="1"/><rect x="674.4" y="107.2" width="6.6" height="4.6" fill="#f4a0a8" stroke="#e81123" stroke-width="1.2"/><rect x="674.4" y="118.3" width="9.2" height="4.6" fill="#f4a0a8" stroke="#e81123" stroke-width="1.2"/><rect x="674.6" y="112.8" width="3.6" height="4.6" fill="#9fd2f5" stroke="#1e88d8" stroke-width="1"/><path d="M853.7 112.9 L856.8 116.4 L859.8 112.9" fill="none" stroke="#242424" stroke-width="1.3"/><path d="M670.9 156.4 V139.1 H689.6 V143" fill="none" stroke="#4a4a4a" stroke-width="1.2"/><path fill="none" d="M670.9 144.9 H689.6 M670.9 150.6 H676 M676.2 139.1 V156.4 M683 139.1 V145 M670.9 156.4 H674" stroke="#777" stroke-width="1"/><path d="M676.3 145 H689.6 V155.8 H676.3 Z" fill="#79b8ec"/><path d="M676.3 155.8 H689.6 V145" fill="none" stroke="#1e6fc4" stroke-width="1"/><path fill="none" d="M689.2 144 L679.6 153.6" stroke="#222" stroke-width="3.6" stroke-linecap="round"/><path fill="none" d="M689.2 144 L679.6 153.6" stroke="#fff" stroke-width="1.5" stroke-linecap="round"/><path d="M673.8 157.4 C674.4 153.6 677.4 152 680.8 153.8 C679.8 156.8 677 157.8 673.8 157.4 Z" fill="#1e6fc4"/><path d="M804.1 145.7 L807.0 149.2 L809.9 145.7" fill="none" stroke="#242424" stroke-width="1.3"/><path d="M670.9 189.2 V171.7 H689.6 V175.5" fill="none" stroke="#4a4a4a" stroke-width="1.2"/><path fill="none" d="M670.9 176.9 H689.6 M676.2 171.7 V189.2 M670.9 189.2 H673.6 M683 189.2 H689.6 V184" stroke="#777" stroke-width="1"/><path d="M676.3 177 H688 L678 187.5 H676.3 Z" fill="#79b8ec"/><path fill="none" d="M676.3 177 H688.6" stroke="#1e6fc4" stroke-width="1"/><path fill="none" d="M689.2 176.6 L679.6 186.2" stroke="#222" stroke-width="3.6" stroke-linecap="round"/><path fill="none" d="M689.2 176.6 L679.6 186.2" stroke="#fff" stroke-width="1.5" stroke-linecap="round"/><path d="M673.8 190 C674.4 186.2 677.4 184.6 680.8 186.4 C679.8 189.4 677 190.4 673.8 190 Z" fill="#1e6fc4"/><path d="M765.7 178.2 L768.6 182.0 L771.5 178.2" fill="none" stroke="#242424" stroke-width="1.3"/><rect x="899.7" y="107.7" width="33.7" height="26.4" fill="#fafafa" stroke="#333" stroke-width="1.3"/><path fill="none" d="M899.7 116.5 H933.4 M899.7 125.3 H933.4 M908.5 107.7 V134.1 M925.1 107.7 V134.1" stroke="#555" stroke-width="1.1"/><rect x="908.6" y="116.6" width="16.4" height="8.6" fill="#9fd2f5" stroke="#1e6fc4" stroke-width="1.4"/><path fill="none" d="M906.8 103.2 H926.5 M907 101.4 V105 M926.3 101.4 V105" stroke="#1e88d8" stroke-width="1.2"/><path d="M912.9 171.0 L916.3 175.1 L919.7 171.0" fill="none" stroke="#242424" stroke-width="1.3"/><circle cx="988.8" cy="116.1" r="12.8" fill="#fafafa" stroke="#333" stroke-width="1.3"/><path fill="none" d="M979.6 125.3 L965.6 139.3" stroke="#333" stroke-width="1.4"/><path d="M980.3 171.0 L983.6 175.1 L986.9 171.0" fill="none" stroke="#242424" stroke-width="1.3"/><path d="M1064.4 106.6 H1051.2 V139.6 H1075.8 V124.4" fill="#f0f0f0" stroke="#c4c4c4" stroke-width="1.5"/><path d="M1055.6 120.6 L1060.3 115.9 L1071.7 127.6 L1067.2 132.2 Z" fill="#f4f4f4" stroke="#c2c2c2" stroke-width="1.3" stroke-linejoin="round"/><path fill="none" d="M1059.8 120.4 L1067.6 128.2" stroke="#bdbdbd" stroke-width="1.4"/><path d="M1065.4 109.2 L1069.8 104.8 L1082.6 117.6 L1078.2 122 Z" fill="#f4f4f4" stroke="#c2c2c2" stroke-width="1.3" stroke-linejoin="round"/><path fill="none" d="M1066.4 111.2 L1076.4 121.2" stroke="#b8b8b8" stroke-width="2"/><path d="M1075.6 107.6 L1077.6 104.2 L1083.6 110.4 L1079.8 112.2 Z" fill="#f4f4f4" stroke="#c2c2c2" stroke-width="1.2" stroke-linejoin="round"/><path d="M1060.3 173.6 L1063.5 176.8 L1066.7 173.6" fill="none" stroke="#b0b0b0" stroke-width="1.1"/><rect x="1132.4" y="106.5" width="33.6" height="33.6" fill="#fff" stroke="#d83b01" stroke-width="1.5"/><rect x="1135.6" y="109.8" width="12.4" height="12" fill="none" stroke="#d83b01" stroke-width="1.3"/><rect x="1150.6" y="109.8" width="12.4" height="12" fill="none" stroke="#d83b01" stroke-width="1.3"/><rect x="1135.6" y="124.8" width="12.4" height="12" fill="none" stroke="#d83b01" stroke-width="1.3"/><rect x="1150.6" y="124.8" width="12.4" height="12" fill="none" stroke="#d83b01" stroke-width="1.3"/><rect x="1210.2" y="106.8" width="33.4" height="33.4" fill="#fafafa" stroke="#333" stroke-width="1.4"/><rect x="1210.9" y="107.5" width="32" height="3.6" fill="#a6a6a6"/><path fill="none" d="M1210.2 118 H1243.6 M1210.2 128.6 H1243.6 M1220 128.6 V140 M1232 128.6 V140" stroke="#9a9a9a" stroke-width="1"/><circle cx="1225.6" cy="120.6" r="10.6" fill="#fff" stroke="#222" stroke-width="1.4"/><path fill="none" d="M1233.2 128.2 L1243.4 139.6" stroke="#222" stroke-width="1.6"/><rect x="1219.8" y="119.4" width="3.2" height="5.8" fill="#fff" stroke="#8a8a8a" stroke-width="1"/><rect x="1223.8" y="114.4" width="3.6" height="10.8" fill="#fff" stroke="#8a8a8a" stroke-width="1"/><rect x="1228.2" y="116.4" width="3.4" height="8.8" fill="#1e88d8"/><path d="M1333.5 136.6 H1325 Q1323 136.6 1323 134.6 V111.2 Q1323 109.2 1325 109.2 H1335 L1345.4 119.6 V121.5 M1335 109.4 V115.6 Q1335 117.6 1337 117.6 H1345" fill="none" stroke="#1473e6" stroke-width="1.6" stroke-linejoin="round"/><path d="M1337.8 127 H1336 Q1334.4 127 1334.4 128.6 V140.4 Q1334.4 142 1336 142 H1351 Q1352.6 142 1352.6 140.4 V128.6 Q1352.6 127 1351 127 H1349.2" fill="none" stroke="#1473e6" stroke-width="1.6"/><path d="M1343.5 134.5 V123.8 M1340 127 L1343.5 123.5 L1347 127" fill="none" stroke="#1473e6" stroke-width="1.5"/><path d="M1473 200 L1478.7 205.6 L1484.4 200" fill="none" stroke="#222" stroke-width="1.5"/><path d="M112.5 242.6 L118.2 248.3 L123.9 242.6" fill="none" stroke="#222" stroke-width="1.5"/><circle cx="144.2" cy="239.6" r="1.3" fill="#333"/><circle cx="144.2" cy="244.6" r="1.3" fill="#333"/><circle cx="144.2" cy="249.6" r="1.3" fill="#333"/><path fill="none" d="M166 238.4 L179.3 251.7 M179.3 238.4 L166 251.7" stroke="#a8a8a8" stroke-width="1.2"/><path d="M193.4 245.2 L199.6 251.4 L211.8 238.6" fill="none" stroke="#a8a8a8" stroke-width="1.2"/><path d="M224.2 253.2 C226.6 254.6 228.2 252.6 228.9 248.6 L230.6 239.4 C231.4 235.6 233.2 234.6 236.4 235.4" fill="none" stroke="#222" stroke-width="1.5"/><circle cx="224.4" cy="252.8" r="1.1" fill="#222"/><circle cx="236.2" cy="235.6" r="1.1" fill="#222"/><path fill="none" d="M228.2 240.3 H233.4" stroke="#222" stroke-width="1.2"/><path d="M232.8 244 C234.6 242.6 235.8 243.2 236.4 245.4 L237.8 250.2 C238.4 252.2 239.8 252.4 241 251.2 M240.6 243.6 C239.6 243 238.8 243.4 237.8 244.6 L233.6 250.6 C232.8 251.8 232 251.8 231.6 251.2" fill="none" stroke="#222" stroke-width="1.5"/><path d="M249 242.4 L254.5 247.6 L260 242.4" fill="none" stroke="#888" stroke-width="1.1"/><path d="M1479.4 240.4 L1485.2 246.2 L1491 240.4" fill="none" stroke="#222" stroke-width="1.5"/></svg>
</body></html>
